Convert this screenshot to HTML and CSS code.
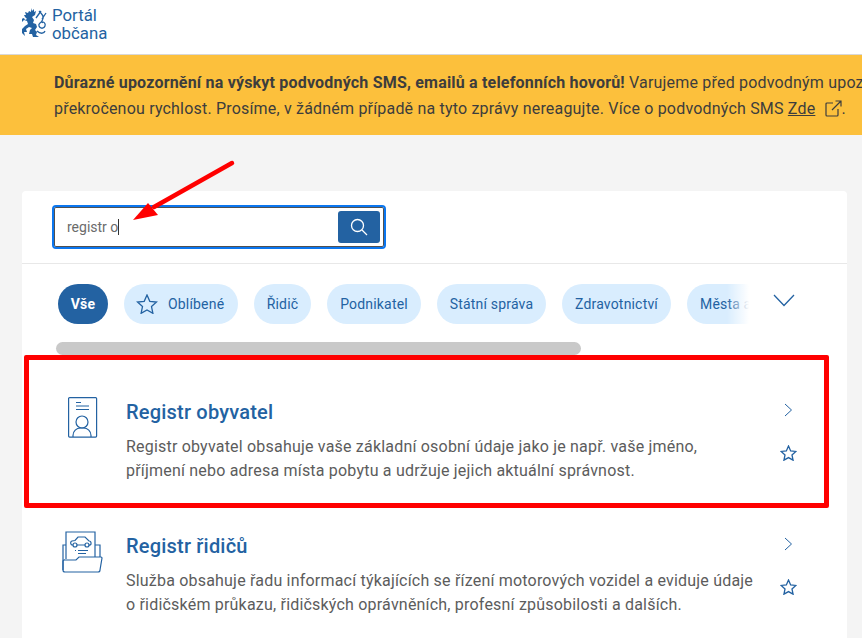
FILE: index.html
```html
<!DOCTYPE html>
<html lang="cs">
<head>
    <meta charset="UTF-8">
    <meta name="viewport" content="width=device-width, initial-scale=1.0">
    <title>Portál občana</title>
    <link rel="stylesheet" href="styles.css">
</head>
<body>
    <div class="header">
        <svg class="logo-lion" width="27" height="34" viewBox="0 0 27 34" fill="none">
            <path d="M9 1l1 3 2-2 0 3 2-1-1 4-3 2 2 3-1 3 3 1 1 3-2 3 2 2-1 3 3 2-6 0-1-3-3 0 1-4 2-2-3-1-3 2 1 3-3 0 1 4-3-3 0-4 3-3 3-2-1-3-3-1-2 2-1-3 3-1 1 2 2-1-2-2-1-2 2 0-1-3 3 1 1-2 2 1z" fill="#2362a2"/>
            <path d="M17 4c3 3 6 6 3 10-2 3-4 2-3 5 1 3 5 3 6 0 1-3-2-5-3-3M19 4l-5 7M24 6l-4 6M15 24c3 3 7 3 8 0" stroke="#2362a2" stroke-width="1.3"/>
        </svg>
        <div class="logo-text">Portál<br>občana</div>
    </div>

    <div class="banner">
        <p><strong>Důrazné upozornění na výskyt podvodných SMS, emailů a telefonních hovorů!</strong> Varujeme před podvodným upoz</p>
        <p>překročenou rychlost. Prosíme, v žádném případě na tyto zprávy nereagujte. Více o podvodných SMS <a href="#">Zde</a>
            <svg class="external-icon" width="17" height="17" viewBox="0 0 17 17" fill="none" stroke="#3d3d3d" stroke-width="1.2">
                <path d="M8 3H2a1 1 0 0 0-1 1v11a1 1 0 0 0 1 1h10a1 1 0 0 0 1-1V9M7 10l9-9M10.500 1H16v5.500"/>
            </svg>.</p>
    </div>

    <div class="card">
        <div class="search-section">
            <div class="search-box">
                <span class="search-value">registr o</span><span class="caret"></span>
                <button class="search-btn">
                    <svg width="18" height="18" viewBox="0 0 18 18" fill="none" stroke="#fff" stroke-width="1.300">
                        <circle cx="7.500" cy="7.500" r="6"/>
                        <path d="M12 12l5 5"/>
                    </svg>
                </button>
            </div>
        </div>

        <div class="filter-section">
            <div class="filter-row">
                <div class="chips">
                    <span class="chip chip-active">Vše</span>
                    <span class="chip chip-star">
                        <svg width="22" height="20" viewBox="0 0 22 20" fill="none" stroke="#2362a2" stroke-width="1.300">
                            <path d="M11 1l2.800 6.300 6.700.7-5 4.600 1.400 6.700-5.900-3.400-5.900 3.400 1.400-6.700-5-4.600 6.700-.7z"/>
                        </svg>
                        Oblíbené
                    </span>
                    <span class="chip chip-short">Řidič</span>
                    <span class="chip chip-podnikatel">Podnikatel</span>
                    <span class="chip chip-wide">Státní správa</span>
                    <span class="chip chip-wide">Zdravotnictví</span>
                    <span class="chip">Města a</span>
                </div>
                <svg class="expand-icon" width="22" height="13" viewBox="0 0 22 13" fill="none" stroke="#2362a2" stroke-width="1.300">
                    <path d="M1 1l10 10.500L21 1"/>
                </svg>
            </div>
            <div class="scroll-thumb"></div>
        </div>

        <div class="item">
            <div class="item-icon">
                <svg width="30" height="41" viewBox="0 0 30 41" fill="none" stroke="#2362a2" stroke-width="1.200">
                    <rect x="0.600" y="0.600" width="28" height="39.500" rx="1"/>
                    <path d="M8 5.500h5M8 9h13M8 12.500h13"/>
                    <circle cx="14" cy="25" r="6"/>
                    <path d="M5 40v-1.500a7.500 7.500 0 0 1 7.500-7.500h3a7.500 7.500 0 0 1 7.500 7.500V40"/>
                </svg>
            </div>
            <div class="item-body">
                <h3>Registr obyvatel</h3>
                <p>Registr obyvatel obsahuje vaše základní osobní údaje jako je např. vaše jméno,<br>příjmení nebo adresa místa pobytu a udržuje jejich aktuální správnost.</p>
            </div>
            <div class="item-actions">
                <svg width="9" height="14" viewBox="0 0 9 14" fill="none" stroke="#2362a2"><path d="M1 1l6.500 6L1 13"/></svg>
                <svg class="item-star" width="17" height="16" viewBox="0 0 22 20" fill="none" stroke="#2362a2" stroke-width="1.700"><path d="M11 1l2.800 6.300 6.700.7-5 4.600 1.400 6.700-5.900-3.400-5.900 3.400 1.400-6.700-5-4.600 6.700-.7z"/></svg>
            </div>
        </div>

        <div class="item">
            <div class="item-icon">
                <svg class="folder-icon" width="41" height="42" viewBox="0 0 41 42" fill="none" stroke="#2362a2" stroke-width="1.200">
                    <path d="M4 28V1h29v25"/>
                    <path d="M4 14H1v25M33 14h5v12"/>
                    <path d="M1 39a2 2 0 0 0 2 2h33a2 2 0 0 0 2-2l2-12a1 1 0 0 0-1-1H17l-3 3H3a1.500 1.500 0 0 0-2 1.500z"/>
                    <path d="M9 13a2 2 0 0 1 1-3l3-.5 3-3.500h7l4 4a2 2 0 0 1 2 2v1a1.500 1.500 0 0 1-2 1H10a1.500 1.500 0 0 1-1-1z"/>
                    <circle cx="13" cy="14" r="2" fill="#fff"/>
                    <circle cx="25" cy="14" r="2" fill="#fff"/>
                    <path d="M13 19.500h1M16 19.500h10M16 22.500h8"/>
                </svg>
            </div>
            <div class="item-body">
                <h3>Registr řidičů</h3>
                <p>Služba obsahuje řadu informací týkajících se řízení motorových vozidel a eviduje údaje<br>o řidičském průkazu, řidičských oprávněních, profesní způsobilosti a dalších.</p>
            </div>
            <div class="item-actions">
                <svg width="9" height="14" viewBox="0 0 9 14" fill="none" stroke="#2362a2"><path d="M1 1l6.500 6L1 13"/></svg>
                <svg class="item-star" width="17" height="16" viewBox="0 0 22 20" fill="none" stroke="#2362a2" stroke-width="1.700"><path d="M11 1l2.800 6.300 6.700.7-5 4.600 1.400 6.700-5.900-3.400-5.900 3.400 1.400-6.700-5-4.600 6.700-.7z"/></svg>
            </div>
        </div>
    </div>

    <!-- Annotations drawn over the screenshot -->
    <div class="mark-box"></div>
    <svg class="mark-arrow" width="110" height="70" viewBox="0 0 110 70">
        <path d="M102 8L24 52" stroke="#ff0000" stroke-width="4.500" stroke-linecap="round"/>
        <path d="M3 65L18 48l10 12z" fill="#ff0000"/>
    </svg>
</body>
</html>
```

FILE: styles.css
```css
html, body {
    height: 100%;
}
body {
    font-family: Roboto, "Liberation Sans", sans-serif;
    margin: 0;
    padding: 0;
    background-color: #f4f4f4;
    overflow: hidden;
    color: #555;
}
.header {
    display: flex;
    align-items: flex-start;
    gap: 3px;
    height: 54px;
    padding-left: 22px;
    background-color: white;
    border-bottom: 1px solid #d8d8d8;
}
.logo-lion {
    margin-top: 7px;
}
.logo-text {
    margin-top: 6px;
    font-size: 16.800px;
    line-height: 18px;
    color: #2362a2;
}
.banner {
    height: 80px;
    box-sizing: border-box;
    padding: 15px 0 0 54px;
    background-color: #fcc03c;
    color: #3d3d3d;
    font-size: 16px;
    line-height: 26px;
    letter-spacing: 0.19px;
    white-space: nowrap;
    overflow: hidden;
}
.banner p {
    margin: 0;
}
.banner strong {
    font-weight: 700;
}
.banner a {
    color: #3d3d3d;
}
.external-icon {
    margin-left: 5px;
    vertical-align: -3px;
}
.card {
    height: 500px;
    margin: 56px 15px 0 22px;
    background-color: white;
    border-radius: 4px;
}
.search-section {
    padding: 14px 30px;
    border-bottom: 1px solid #e8e8e8;
}
.search-box {
    display: flex;
    align-items: center;
    box-sizing: border-box;
    width: 334px;
    height: 44px;
    padding: 0 4px 0 13px;
    border: 2px solid #0b76ef;
    border-radius: 4px;
    box-shadow: inset 0 0 0 1px #505050;
}
.search-value {
    font-size: 14px;
    color: #6b6b6b;
}
.caret {
    width: 1px;
    height: 16px;
    background-color: #333;
}
.search-btn {
    display: flex;
    align-items: center;
    justify-content: center;
    width: 42px;
    height: 32px;
    margin-left: auto;
    padding: 0;
    background-color: #2362a2;
    border: none;
    border-radius: 3px;
}
.filter-section {
    padding: 20px 36px 0 36px;
}
.filter-row {
    display: flex;
    align-items: flex-start;
    gap: 20px;
}
.chips {
    position: relative;
    flex: none;
    display: flex;
    gap: 16px;
    width: 695px;
    overflow: hidden;
}
.chips::after {
    content: "";
    position: absolute;
    top: 0;
    right: 0;
    bottom: 0;
    width: 26px;
    background: linear-gradient(to right, rgba(255,255,255,0), #fff 85%);
}
.chip {
    flex: none;
    display: flex;
    align-items: center;
    height: 40px;
    padding: 0 13px;
    border-radius: 20px;
    background-color: #d9edfe;
    color: #2362a2;
    font-size: 14px;
    letter-spacing: 0.18px;
    white-space: nowrap;
}
.chip-active {
    width: 50px;
    box-sizing: border-box;
    justify-content: center;
    padding: 0;
    background-color: #2362a2;
    color: white;
    font-weight: 700;
}
.chip-star {
    gap: 10px;
    width: 114px;
    box-sizing: border-box;
    padding: 0 0 0 12px;
}
.chip-short {
    width: 57px;
    box-sizing: border-box;
    justify-content: center;
    padding: 0;
}
.chip-podnikatel {
    width: 94px;
    box-sizing: border-box;
    justify-content: center;
    padding: 0;
}
.chip-wide {
    width: 109px;
    box-sizing: border-box;
    justify-content: center;
    padding: 0;
}
.expand-icon {
    flex: none;
    margin-top: 10px;
}
.scroll-thumb {
    width: 525px;
    height: 13px;
    margin: 18px 0 0 -2px;
    border-radius: 7px;
    background-color: #c9c9c9;
}
.item {
    display: flex;
    height: 134px;
    padding-left: 46px;
}
.filter-section + .item {
    margin-top: 42px;
}
.item-icon {
    flex: none;
    width: 58px;
}
.folder-icon {
    margin-left: -6px;
}
.item-body {
    width: 640px;
}
.item-body h3 {
    margin: 3px 0 11px;
    font-size: 20px;
    line-height: 24px;
    font-weight: 500;
    letter-spacing: 0.2px;
    color: #2362a2;
}
.item-body p {
    margin: 0;
    font-size: 16px;
    line-height: 24px;
    letter-spacing: 0.2px;
    color: #5c5c5c;
}
.item-actions {
    display: flex;
    flex-direction: column;
    align-items: center;
    width: 20px;
    margin-left: 12px;
    padding-top: 6px;
}
.item-star {
    margin-top: 28px;
}
.mark-box {
    position: absolute;
    left: 24px;
    top: 355px;
    width: 795px;
    height: 143px;
    border: 5px solid #ff0000;
    border-radius: 2px;
}
.mark-arrow {
    position: absolute;
    left: 130px;
    top: 155px;
}
```
